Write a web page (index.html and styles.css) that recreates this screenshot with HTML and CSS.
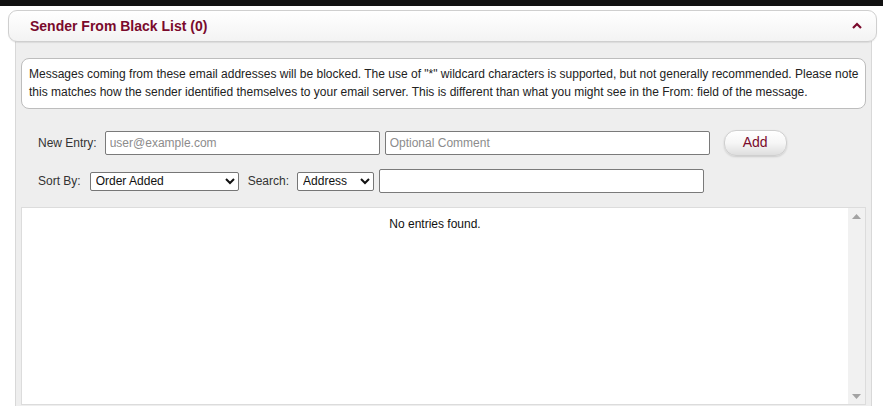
FILE: index.html
```html
<!DOCTYPE html>
<html>
<head>
<meta charset="utf-8">
<link rel="stylesheet" href="styles.css">
</head>
<body>
<div class="topbar"></div>
<div class="section">
  <div class="section-head">
    <span class="title">Sender From Black List (0)</span>
    <svg class="caret" width="10" height="7" viewBox="0 0 10 7"><path d="M1 6 L5 2 L9 6" fill="none" stroke="#7a0a2c" stroke-width="2.2"/></svg>
  </div>
  <div class="section-body">
    <div class="info">Messages coming from these email addresses will be blocked. The use of "*" wildcard characters is supported, but not generally recommended. Please note<br>this matches how the sender identified themselves to your email server. This is different than what you might see in the From: field of the message.</div>
    <div class="row row-entry">
      <label class="lbl">New Entry:</label>
      <input class="txt txt-email" type="text" placeholder="user@example.com">
      <input class="txt txt-comment" type="text" placeholder="Optional Comment">
      <button class="btn-add">Add</button>
    </div>
    <div class="row row-sort">
      <label class="lbl">Sort By:</label>
      <select class="sel sel-sort"><option>Order Added</option></select>
      <label class="lbl lbl-search">Search:</label>
      <select class="sel sel-search"><option>Address</option></select>
      <input class="txt txt-search" type="text">
    </div>
    <div class="list">
      <div class="list-content">No entries found.</div>
      <div class="scrollbar">
        <svg width="9" height="5" viewBox="0 0 9 5"><path d="M0 5 L4.5 0 L9 5 Z" fill="#a3a3a3"/></svg>
        <svg width="9" height="5" viewBox="0 0 9 5"><path d="M0 0 L4.5 5 L9 0 Z" fill="#a3a3a3"/></svg>
      </div>
    </div>
  </div>
</div>
</body>
</html>
```

FILE: styles.css
```css
html, body {
  margin: 0;
  padding: 0;
  background: #ffffff;
  font-family: "Liberation Sans", Arial, sans-serif;
  font-size: 12px;
  color: #222;
  height: 100%;
  overflow: hidden;
}
.topbar {
  height: 6px;
  background: #111;
}
.section {
  margin: 4px 6px 0 8px;
}
.section-head {
  box-sizing: border-box;
  height: 32px;
  border: 1px solid #cfcfcf;
  border-radius: 9px;
  background: linear-gradient(#ffffff, #f3f3f3);
  box-shadow: 0 1px 1px rgba(0,0,0,0.08);
  display: flex;
  align-items: center;
  justify-content: space-between;
  padding: 0 14px 0 21px;
  position: relative;
  z-index: 1;
}
.title {
  font-size: 14px;
  font-weight: bold;
  color: #7a0a2c;
}
.caret {
  margin-top: -2px;
}
.section-body {
  box-sizing: border-box;
  margin: -1px 5px 0 7px;
  background: #eeeeee;
  border-left: 1px solid #d8d8d8;
  border-right: 1px solid #d8d8d8;
  padding: 17px 5px 1px 5px;
  height: calc(100vh - 41px);
  display: flex;
  flex-direction: column;
}
.info {
  background: #fff;
  border: 1px solid #bdbdbd;
  border-radius: 8px;
  padding: 6px 7px 7px 7px;
  line-height: 18px;
  color: #222;
  white-space: nowrap;
  overflow: hidden;
}
.row {
  display: flex;
  align-items: center;
  padding-left: 17px;
}
.row-entry {
  margin-top: 21px;
  height: 26px;
}
.row-sort {
  margin-top: 13px;
  height: 24px;
}
.lbl {
  color: #333;
  margin-right: 8px;
}
.txt {
  box-sizing: border-box;
  height: 24px;
  border: 1px solid #7a7a7a;
  border-radius: 2px;
  padding: 0 4px;
  font-family: "Liberation Sans", Arial, sans-serif;
  font-size: 12px;
  color: #222;
  background: #fff;
  margin: 0;
}
.txt::placeholder {
  color: #8c8c8c;
}
.txt-email { width: 275px; }
.txt-comment { width: 325px; margin-left: 5px; }
.txt-search { width: 325px; margin-left: 5px; }
.btn-add {
  margin-left: 14px;
  width: 63px;
  height: 26px;
  border: 1px solid #cfcfcf;
  border-radius: 12px;
  background: linear-gradient(#ffffff 0%, #f6f6f6 50%, #dedede 100%);
  box-shadow: 0 1px 2px rgba(0,0,0,0.15);
  color: #7a0a2c;
  font-family: "Liberation Sans", Arial, sans-serif;
  font-size: 14px;
  padding: 0 0 2px 0;
}
.sel {
  box-sizing: border-box;
  height: 19px;
  border: 1px solid #767676;
  border-radius: 2px;
  background: #fff;
  font-family: "Liberation Sans", Arial, sans-serif;
  font-size: 12px;
  color: #111;
  padding: 0 0 0 1px;
  margin: 0;
}
.sel-sort { width: 149px; margin-left: 1px; }
.lbl-search { margin-left: 9px; }
.sel-search { width: 77px; }
.list {
  margin-top: 14px;
  background: #fff;
  border: 1px solid #dcdcdc;
  flex: 1;
  display: flex;
}
.list-content {
  flex: 1;
  text-align: center;
  padding-top: 9px;
  color: #111;
}
.scrollbar {
  width: 17px;
  background: #f1f1f1;
  display: flex;
  flex-direction: column;
  justify-content: space-between;
  align-items: center;
  padding: 6px 0 5px 0;
  box-sizing: border-box;
}
```
